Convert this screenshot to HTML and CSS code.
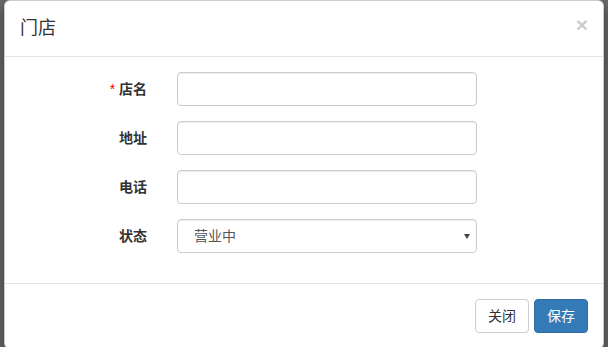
FILE: index.html
```html
<!DOCTYPE html>
<html lang="zh-CN">

<head>
    <meta charset="UTF-8">
    <meta name="viewport" content="width=device-width, initial-scale=1.0">
    <title>门店</title>
    <link rel="stylesheet" href="styles.css">
</head>

<body>
    <div class="modal-dialog">
        <div class="modal-content">
            <div class="modal-header">
                <h4 class="modal-title">门店</h4>
                <button type="button" class="close">&times;</button>
            </div>

            <div class="modal-body">
                <form class="store-form">
                    <div class="form-group">
                        <label class="form-label" for="store-name"><span class="required">*</span> 店名</label>
                        <input type="text" class="form-control" id="store-name">
                    </div>
                    <div class="form-group">
                        <label class="form-label" for="store-address">地址</label>
                        <input type="text" class="form-control" id="store-address">
                    </div>
                    <div class="form-group">
                        <label class="form-label" for="store-phone">电话</label>
                        <input type="text" class="form-control" id="store-phone">
                    </div>
                    <div class="form-group">
                        <label class="form-label" for="store-status">状态</label>
                        <div class="select-wrap">
                            <select class="form-control" id="store-status">
                                <option>营业中</option>
                                <option>已关闭</option>
                            </select>
                        </div>
                    </div>
                </form>
            </div>

            <div class="modal-footer">
                <button type="button" class="btn btn-default">关闭</button>
                <button type="button" class="btn btn-primary">保存</button>
            </div>
        </div>
    </div>
</body>

</html>
```

FILE: styles.css
```css
body {
    font-family: "Liberation Sans", "Noto Sans CJK SC", sans-serif;
    font-size: 14px;
    line-height: 20px;
    color: #333;
    background-color: #6b6b6b;
    margin: 0;
    height: 347px;
    overflow: hidden;
}

.modal-dialog {
    width: 600px;
    margin: 0 4px;
}

.modal-content {
    background-color: #fff;
    border: 1px solid rgba(0, 0, 0, 0.2);
    border-radius: 6px;
    box-shadow: 0 5px 15px rgba(0, 0, 0, 0.5);
}

.modal-header {
    display: flex;
    justify-content: space-between;
    align-items: flex-start;
    padding: 15px;
    border-bottom: 1px solid #e5e5e5;
}

.modal-title {
    margin: 0;
    font-size: 18px;
    font-weight: normal;
    line-height: 25px;
    height: 25px;
}

.close {
    padding: 0;
    margin-top: -2px;
    border: none;
    background: transparent;
    font-family: "Liberation Sans", sans-serif;
    font-size: 21px;
    font-weight: bold;
    line-height: 1;
    color: #000;
    opacity: 0.2;
    cursor: pointer;
}

.modal-body {
    padding: 15px;
}

.store-form {
    margin: 0;
}

.form-group {
    display: flex;
    align-items: flex-start;
    margin-bottom: 15px;
}

.form-label {
    width: 127px;
    padding-top: 7px;
    margin-right: 30px;
    text-align: right;
    font-weight: bold;
}

.required {
    color: red;
    font-weight: normal;
}

.form-control {
    box-sizing: border-box;
    width: 300px;
    height: 34px;
    padding: 6px 12px;
    font-family: inherit;
    font-size: 14px;
    color: #555;
    background-color: #fff;
    border: 1px solid #ccc;
    border-radius: 4px;
    box-shadow: inset 0 1px 1px rgba(0, 0, 0, 0.075);
    outline: none;
}

.select-wrap {
    position: relative;
}

.select-wrap select {
    appearance: none;
    -webkit-appearance: none;
    padding-left: 16px;
}

.select-wrap::after {
    content: "";
    position: absolute;
    right: 7px;
    top: 15px;
    border-left: 3px solid transparent;
    border-right: 3px solid transparent;
    border-top: 5px solid #444;
    pointer-events: none;
}

.modal-footer {
    display: flex;
    justify-content: flex-end;
    gap: 5px;
    padding: 15px;
    border-top: 1px solid #e5e5e5;
}

.btn {
    height: 34px;
    padding: 6px 12px;
    font-family: inherit;
    font-size: 14px;
    line-height: 20px;
    border: 1px solid transparent;
    border-radius: 4px;
    cursor: pointer;
}

.btn-default {
    color: #333;
    background-color: #fff;
    border-color: #ccc;
}

.btn-primary {
    color: #fff;
    background-color: #337ab7;
    border-color: #2e6da4;
}
```
